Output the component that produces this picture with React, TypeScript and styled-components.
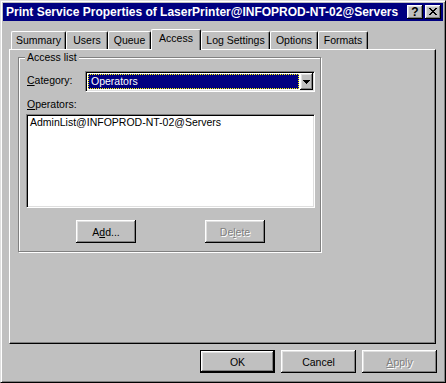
import React from "react";
import styled, { createGlobalStyle } from "styled-components";

const GlobalStyle = createGlobalStyle`
  html, body { margin: 0; padding: 0; background: #c0c0c0; }
  body {
    font-family: "Liberation Sans", Arial, sans-serif;
    font-size: 10.5px;
    color: #000;
  }
  * { box-sizing: border-box; }
`;

const raised = `
  box-shadow: inset -1px -1px #000, inset 1px 1px #fff, inset -2px -2px #808080, inset 2px 2px #dfdfdf;
`;
const sunken = `
  border: 1px solid;
  border-color: #808080 #fff #fff #808080;
  box-shadow: inset 1px 1px #000, inset -1px -1px #dfdfdf;
`;

const Window = styled.div`
  width: 446px;
  height: 383px;
  background: #c0c0c0;
  border: 1px solid;
  border-color: #dfdfdf #000 #000 #dfdfdf;
  box-shadow: inset 1px 1px #fff, inset -1px -1px #808080;
  padding: 2px;
  display: flex;
  flex-direction: column;
`;

const TitleBar = styled.div`
  height: 18px;
  background: #000080;
  color: #fff;
  display: flex;
  align-items: center;
  padding-left: 3px;
  padding-right: 2px;
`;

const TitleText = styled.div`
  flex: 1;
  font-weight: bold;
  font-size: 12px;
  white-space: nowrap;
  line-height: 14px;
`;

const CaptionButtons = styled.div`
  display: flex;
  gap: 2px;
`;

const CaptionButton = styled.div`
  width: 16px;
  height: 14px;
  background: #c0c0c0;
  ${raised}
  display: flex;
  align-items: center;
  justify-content: center;
  color: #000;
  font-weight: bold;
  font-size: 12px;
  line-height: 12px;
  padding-bottom: 1px;
`;

const Body = styled.div`
  flex: 1;
  display: flex;
  flex-direction: column;
  padding: 8px 7px 0 6px;
`;

const TabStrip = styled.div`
  display: flex;
  align-items: flex-end;
  height: 20px;
  padding-left: 2px;
  position: relative;
  z-index: 1;
`;

const Tab = styled.div<{ $w: number; $active?: boolean }>`
  width: ${(p) => p.$w}px;
  height: ${(p) => (p.$active ? 21 : 18)}px;
  margin-bottom: ${(p) => (p.$active ? -1 : 0)}px;
  background: #c0c0c0;
  border-top: 1px solid #fff;
  border-left: 1px solid #fff;
  border-right: 1px solid #000;
  border-radius: 2px 2px 0 0;
  box-shadow: inset -1px 0 #808080;
  text-align: center;
  line-height: 12px;
  padding-top: 2px;
  white-space: nowrap;
`;

const Panel = styled.div`
  height: 295px;
  border-top: 1px solid #fff;
  border-left: 1px solid #fff;
  border-right: 1px solid #000;
  border-bottom: 1px solid #000;
  box-shadow: inset -1px -1px #808080;
  padding: 7px 0 0 8px;
`;

const GroupBox = styled.div`
  position: relative;
  width: 303px;
  height: 195px;
  border: 1px solid #808080;
  box-shadow: inset 1px 1px #fff, 1px 1px #fff;
  padding: 13px 0 0 8px;
  display: flex;
  flex-direction: column;
`;

const Legend = styled.span`
  position: absolute;
  top: -7px;
  left: 6px;
  padding: 0 2px;
  background: #c0c0c0;
  line-height: 12px;
`;

const FieldRow = styled.div`
  display: flex;
  align-items: flex-start;
`;

const Label = styled.div<{ $w?: number; $top?: number }>`
  width: ${(p) => (p.$w ? `${p.$w}px` : "auto")};
  line-height: 12px;
  padding-top: ${(p) => p.$top ?? 0}px;
`;

const Combo = styled.div`
  width: 230px;
  height: 21px;
  ${sunken}
  background: #fff;
  padding: 1px;
  display: flex;
`;

const ComboValue = styled.div`
  flex: 1;
  margin: 1px;
  background: #000080;
  color: #fff;
  outline: 1px dotted #ffff00;
  outline-offset: -1px;
  line-height: 14px;
  padding-left: 3px;
`;

const DropButton = styled.div`
  width: 13px;
  height: 17px;
  background: #c0c0c0;
  ${raised}
  display: flex;
  align-items: center;
  justify-content: center;
`;

const ListBox = styled.div`
  width: 289px;
  height: 94px;
  margin-left: -1px;
  margin-top: 4px;
  ${sunken}
  background: #fff;
  padding: 1px 3px 0;
  line-height: 12px;
`;

const ButtonRow = styled.div<{ $end?: boolean }>`
  display: flex;
  gap: ${(p) => (p.$end ? 6 : 69)}px;
  justify-content: ${(p) => (p.$end ? "flex-end" : "flex-start")};
  padding-left: ${(p) => (p.$end ? 0 : 49)}px;
  margin-top: ${(p) => (p.$end ? 6 : 12)}px;
  margin-right: ${(p) => (p.$end ? -1 : 0)}px;
`;

const Button = styled.div<{ $w: number; $default?: boolean; $disabled?: boolean }>`
  width: ${(p) => p.$w}px;
  height: 23px;
  background: #c0c0c0;
  display: flex;
  align-items: center;
  justify-content: center;
  line-height: 12px;
  color: ${(p) => (p.$disabled ? "#808080" : "#000")};
  text-shadow: ${(p) => (p.$disabled ? "1px 1px 0 #fff" : "none")};
  box-shadow: ${(p) =>
    p.$default
      ? "inset 0 0 0 1px #000, inset -2px -2px #000, inset 2px 2px #fff, inset -3px -3px #808080, inset 3px 3px #dfdfdf"
      : "inset -1px -1px #000, inset 1px 1px #fff, inset -2px -2px #808080, inset 2px 2px #dfdfdf"};
`;

const tabs = [
  { label: "Summary", w: 55 },
  { label: "Users", w: 42 },
  { label: "Queue", w: 43 },
  { label: "Access", w: 50, active: true },
  { label: "Log Settings", w: 69 },
  { label: "Options", w: 48 },
  { label: "Formats", w: 50 },
];

export default function App() {
  return (
    <>
      <GlobalStyle />
      <Window>
        <TitleBar>
          <TitleText>Print Service Properties of LaserPrinter@INFOPROD-NT-02@Servers</TitleText>
          <CaptionButtons>
            <CaptionButton>?</CaptionButton>
            <CaptionButton>
              <svg width="8" height="7" viewBox="0 0 8 7" shapeRendering="crispEdges">
                <path
                  d="M0 0h2v1H0zM6 0h2v1H6zM1 1h2v1H1zM5 1h2v1H5zM2 2h4v1H2zM3 3h2v1H3zM2 4h4v1H2zM1 5h2v1H1zM5 5h2v1H5zM0 6h2v1H0zM6 6h2v1H6z"
                  fill="#000"
                />
              </svg>
            </CaptionButton>
          </CaptionButtons>
        </TitleBar>
        <Body>
          <TabStrip>
            {tabs.map((t) => (
              <Tab key={t.label} $w={t.w} $active={t.active}>
                {t.label}
              </Tab>
            ))}
          </TabStrip>
          <Panel>
            <GroupBox>
              <Legend>Access list</Legend>
              <FieldRow>
                <Label $w={58} $top={3}>
                  <u>C</u>ategory:
                </Label>
                <Combo>
                  <ComboValue>Operators</ComboValue>
                  <DropButton>
                    <svg width="7" height="4" viewBox="0 0 7 4" shapeRendering="crispEdges">
                      <path d="M0 0h7v1H0zM1 1h5v1H1zM2 2h3v1H2zM3 3h1v1H3z" fill="#000" />
                    </svg>
                  </DropButton>
                </Combo>
              </FieldRow>
              <Label $top={6}>
                <u>O</u>perators:
              </Label>
              <ListBox>AdminList@INFOPROD-NT-02@Servers</ListBox>
              <ButtonRow>
                <Button $w={60}>
                  A<u>d</u>d...
                </Button>
                <Button $w={60} $disabled>
                  De<u>l</u>ete
                </Button>
              </ButtonRow>
            </GroupBox>
          </Panel>
          <ButtonRow $end>
            <Button $w={75} $default>
              OK
            </Button>
            <Button $w={75}>Cancel</Button>
            <Button $w={75} $disabled>
              <u>A</u>pply
            </Button>
          </ButtonRow>
        </Body>
      </Window>
    </>
  );
}
